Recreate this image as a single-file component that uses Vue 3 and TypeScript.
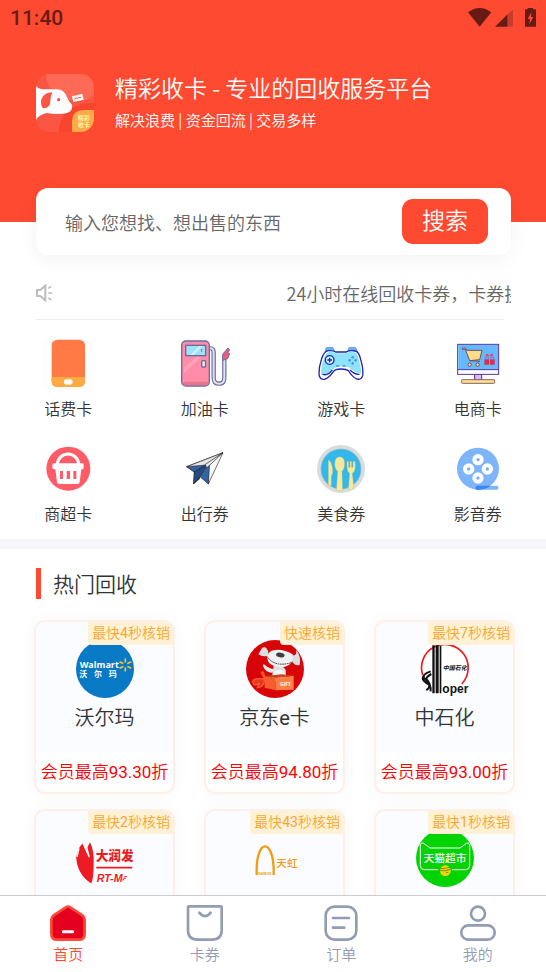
<script setup lang="ts">
import { ref } from 'vue'

type MenuIcon = 'phone' | 'fuel' | 'game' | 'shop' | 'basket' | 'travel' | 'food' | 'film'
type Brand = 'walmart' | 'jd' | 'sinopec' | 'rtmart' | 'rainbow' | 'tmall'
type TabIcon = 'home' | 'card' | 'order' | 'me'

interface MenuItem { icon: MenuIcon; label: string }
interface CardItem { brand: Brand; name: string; badge: string; price: string }
interface TabItem { icon: TabIcon; label: string }

const keyword = ref('')
const activeTab = ref<TabIcon>('home')

const menu: MenuItem[] = [
  { icon: 'phone', label: '话费卡' },
  { icon: 'fuel', label: '加油卡' },
  { icon: 'game', label: '游戏卡' },
  { icon: 'shop', label: '电商卡' },
  { icon: 'basket', label: '商超卡' },
  { icon: 'travel', label: '出行券' },
  { icon: 'food', label: '美食券' },
  { icon: 'film', label: '影音券' },
]

const cards: CardItem[] = [
  { brand: 'walmart', name: '沃尔玛', badge: '最快4秒核销', price: '会员最高93.30折' },
  { brand: 'jd', name: '京东e卡', badge: '快速核销', price: '会员最高94.80折' },
  { brand: 'sinopec', name: '中石化', badge: '最快7秒核销', price: '会员最高93.00折' },
  { brand: 'rtmart', name: '', badge: '最快2秒核销', price: '' },
  { brand: 'rainbow', name: '', badge: '最快43秒核销', price: '' },
  { brand: 'tmall', name: '', badge: '最快1秒核销', price: '' },
]

const tabs: TabItem[] = [
  { icon: 'home', label: '首页' },
  { icon: 'card', label: '卡券' },
  { icon: 'order', label: '订单' },
  { icon: 'me', label: '我的' },
]
</script>

<template>
  <div class="app">
    <main class="content">
      <header class="hero">
        <div class="status">
          <span class="clock">11:40</span>
          <svg class="status-icons" viewBox="0 0 204 60" aria-hidden="true">
            <path d="M0 13Q35-13 70 13L35 56Z" fill="#661c14" />
            <path d="M81 56L119 19V56Z" fill="#661c14" />
            <path d="M119 19L135 4V56H119Z" fill="#c93c2a" />
            <path d="M171 4H179V0H195V4H204V56H171Z" fill="#661c14" />
            <path d="M190 13L179 33H186L184 49L196 27H189Z" fill="#fe4a30" />
          </svg>
        </div>
        <div class="brand">
          <svg class="logo" viewBox="0 0 174 174" aria-hidden="true">
            <defs>
              <clipPath id="logo-clip"><rect width="174" height="174" rx="40" /></clipPath>
            </defs>
            <g clip-path="url(#logo-clip)">
              <rect width="174" height="174" fill="#fb5644" />
              <path d="M30 0H174V62Q140 90 90 76Q30 55 30 0Z" fill="#ff6a56" />
              <path d="M68 174Q72 88 174 86V174Z" fill="#f8452f" />
              <path d="M108 174V140Q110 108 142 108H174V140Q172 174 140 174Z" fill="#feaa47" />
            </g>
            <path d="M0 36Q8 46 24 46H64Q84 46 93 70Q97 82 108 92Q112 118 78 119Q58 122 34 117Q12 120 0 137Z" fill="#fff" />
            <path d="M49 55Q24 55 16 76Q13 91 20 102Q40 105 43 84Q43 68 49 55Z" fill="#fb5644" />
            <circle cx="68" cy="77" r="5" fill="#fb5644" />
            <path d="M108 67L139 60L143 77L112 84Z" fill="#fff" />
            <path d="M116 76L120 71L124 75L128 70L135 71" fill="none" stroke="#fb5644" stroke-width="3" />
            <text x="125" y="137" class="logo-text">精彩</text>
            <text x="125" y="158" class="logo-text">收卡</text>
          </svg>
          <div>
            <h1 class="title">精彩收卡 - 专业的回收服务平台</h1>
            <p class="subtitle">解决浪费 | 资金回流 | 交易多样</p>
          </div>
        </div>
      </header>

      <form class="search" @submit.prevent>
        <input v-model="keyword" class="search-input" type="text" aria-label="输入您想找、想出售的东西" placeholder="输入您想找、想出售的东西" />
        <button class="search-button" type="submit">搜索</button>
      </form>

      <div class="notice">
        <svg class="speaker" viewBox="0 0 54 54" fill="none" stroke="#bdbdbd" aria-hidden="true">
          <path d="M3 18H13L28 5V49L13 36H3Z" stroke-width="6" />
          <path d="M37 13L46 7M37 27H48M37 42L46 47" stroke-width="5" />
        </svg>
        <div class="notice-window"><span class="notice-text">24小时在线回收卡券，卡券换</span></div>
      </div>

      <nav class="menu">
        <a v-for="item in menu" :key="item.icon" class="menu-item" href="#">
          <svg v-if="item.icon === 'phone'" class="menu-icon" viewBox="0 0 150 150" aria-hidden="true">
            <rect width="150" height="150" fill="#fdfdfd" />
            <rect x="26" y="2" width="100" height="142" rx="17" fill="#ff7a45" />
            <path d="M26 114H126V127Q126 144 109 144H43Q26 144 26 127Z" fill="#ffab43" />
            <rect x="63" y="121" width="26" height="16" rx="8" fill="#fff" />
          </svg>
          <svg v-else-if="item.icon === 'fuel'" class="menu-icon" viewBox="0 0 150 150" aria-hidden="true">
            <g fill="none">
              <path d="M90 28Q101 27 101 41V116Q101 134 117 134Q133 134 133 116V62" stroke="#6b6b9d" stroke-width="13" />
              <path d="M90 28Q101 27 101 41V116Q101 134 117 134Q133 134 133 116V62" stroke="#dfe3f6" stroke-width="6" />
            </g>
            <path d="M128 46L144 27L149 34L143 40L149 44L143 59L128 64Z" fill="#e95f7b" stroke="#6b6b9d" stroke-width="3" />
            <rect x="5" y="6" width="83" height="135" rx="13" fill="#ff8daa" stroke="#6b6b9d" stroke-width="4" />
            <path d="M7 128H86Q84 139 76 139H18Q8 139 7 128Z" fill="#e8758e" />
            <path d="M12 87L50 53H65L12 101Z" fill="#ffa3b9" />
            <rect x="17" y="19" width="60" height="31" fill="#9de2fc" stroke="#6b6b9d" stroke-width="4" />
            <path d="M31 48L57 21H68L41 48Z" fill="#cdf2ff" />
            <path d="M65 30V38" stroke="#6b6b9d" stroke-width="3" />
            <rect x="65" y="65" width="12" height="19" rx="3" fill="#dfe3f6" stroke="#6b6b9d" stroke-width="4" />
          </svg>
          <svg v-else-if="item.icon === 'game'" class="menu-icon" viewBox="0 0 150 150" aria-hidden="true">
            <path d="M27 38L31 26H51L56 38M95 38L99 26H119L123 38" fill="#66b8fa" stroke="#4e9df0" stroke-width="3" />
            <path d="M36 35Q52 34 59 39H91Q99 33 118 36Q129 38 134 62Q143 91 140 110Q136 124 122 120Q108 113 98 96Q91 90 75 90Q57 90 52 98Q38 118 26 121Q11 123 9 106Q8 85 16 62Q23 38 36 35Z" fill="#fff" />
            <path d="M39 39Q52 38 59 43H91Q99 37 115 40Q125 42 128 62Q138 95 134 104L116 98L98 85Q75 78 57 86L35 103L16 108Q13 90 22 64Q29 41 39 39Z" fill="#8de3fd" />
            <path d="M36 35Q52 34 59 39H91Q99 33 118 36Q129 38 134 62Q143 91 140 110Q136 124 122 120Q108 113 98 96Q91 90 75 90Q57 90 52 98Q38 118 26 121Q11 123 9 106Q8 85 16 62Q23 38 36 35Z" fill="none" stroke="#2222ae" stroke-width="4" />
            <path d="M21 106Q35 111 48 94M129 106Q116 107 103 94" fill="none" stroke="#2222ae" stroke-width="4" stroke-linecap="round" />
            <circle cx="41" cy="63" r="13" fill="#c8f4ff" stroke="#2222ae" stroke-width="4" />
            <path d="M34 63H48M41 56V70" stroke="#2222ae" stroke-width="4" />
            <g fill="#4797ec"><circle cx="110" cy="55" r="4" /><circle cx="101" cy="64" r="4" /><circle cx="119" cy="64" r="4" /><circle cx="110" cy="73" r="4" /></g>
            <path d="M60 81H70M79 81H89" stroke="#4797ec" stroke-width="4" />
          </svg>
          <svg v-else-if="item.icon === 'shop'" class="menu-icon" viewBox="0 0 150 150" aria-hidden="true">
            <rect x="65" y="106" width="21" height="17" fill="#dfb9f7" stroke="#4f3290" stroke-width="3" />
            <rect x="14" y="16" width="123" height="90" fill="#fff" stroke="#4f3290" stroke-width="3" />
            <rect x="16" y="18" width="119" height="73" fill="#65baff" />
            <path d="M14 92H137" stroke="#4f3290" stroke-width="3" />
            <path d="M16 103H135" stroke="#eee2fc" stroke-width="4" />
            <rect x="26" y="122" width="99" height="11" rx="2" fill="#ffe08b" stroke="#8b6270" stroke-width="3" />
            <path d="M28 27H38L41 34H87L80 62L50 65L37 31H28ZM50 65L81 67" fill="#ffdc87" stroke="#714c68" stroke-width="3" />
            <circle cx="50" cy="77" r="5" fill="#ffdc87" stroke="#714c68" stroke-width="3" />
            <circle cx="74" cy="77" r="5" fill="#ffdc87" stroke="#714c68" stroke-width="3" />
            <path d="M94 61H108V77H94ZM111 61H125V77H111Z" fill="#d72f55" />
            <path d="M97 60V54H106V60M113 60V54H122V60" fill="none" stroke="#8074ba" stroke-width="3" />
            <circle cx="102" cy="48" r="4" fill="#d54c76" /><circle cx="116" cy="48" r="4" fill="#d54c76" />
            <path d="M102 47Q109 55 116 47" fill="none" stroke="#d54c76" stroke-width="3" />
          </svg>
          <svg v-else-if="item.icon === 'basket'" class="menu-icon" viewBox="0 0 150 150" aria-hidden="true">
            <circle cx="76" cy="74" r="66" fill="#ff5c67" />
            <path d="M43 62A32 32 0 0 1 107 62" fill="none" stroke="#fff" stroke-width="9" />
            <path d="M33 58H117Q122 58 122 63V71Q122 76 117 76H115L110 114Q109 120 103 120H49Q43 120 42 114L37 76H33Q28 76 28 71V63Q28 58 33 58Z" fill="#fff" />
            <path d="M51 81H60V105H51ZM71 81H81V105H71ZM91 81H100V105H91Z" fill="#ff5c67" />
          </svg>
          <svg v-else-if="item.icon === 'travel'" class="menu-icon" viewBox="0 0 150 150" aria-hidden="true">
            <g stroke="#292b32" stroke-width="2" stroke-linejoin="round">
              <path d="M129 26L20 68L82 61Z" fill="#f2f2f0" />
              <path d="M129 26L20 68L43 84L81 64Z" fill="#e4e5e5" />
              <path d="M20 68L80 63L43 84Z" fill="#3165a4" />
              <path d="M129 26L82 62L85 120Z" fill="#f7f7f5" />
              <path d="M43 84L84 58L41 119Z" fill="#244b82" />
              <path d="M41 119L58 99L59 104Z" fill="#292b32" />
              <path d="M43 84L84 60L60 98L41 119Z" fill="#244b82" />
              <path d="M60 98L89 57L85 120Z" fill="#3165a4" />
              <path d="M76 61L129 26L80 72Z" fill="#e8e8e6" />
            </g>
          </svg>
          <svg v-else-if="item.icon === 'food'" class="menu-icon" viewBox="0 0 150 150" aria-hidden="true">
            <circle cx="75" cy="75" r="72" fill="#d9dcdd" />
            <circle cx="75" cy="75" r="60" fill="#31b8ec" stroke="#8bb5c2" stroke-width="2" />
            <g fill="#f5e99c" stroke="#a6af86" stroke-width="1">
              <path d="M37 47Q48 53 50 77Q52 89 46 96V125H37Z" />
              <path d="M71 38Q87 39 86 61Q86 75 78 82L80 140H61L65 82Q56 75 56 61Q56 39 71 38Z" />
              <path d="M93 52H98V70H102V52H107V70H111V52H117Q121 82 109 88L114 134Q105 140 97 136L101 88Q91 84 93 52Z" />
            </g>
          </svg>
          <svg v-else class="menu-icon" viewBox="0 0 150 150" aria-hidden="true">
            <circle cx="75" cy="74" r="63" fill="#7eb5fa" />
            <rect x="68" y="125" width="68" height="12" rx="4" fill="#7eb5fa" />
            <path d="M72 125H113Q98 137 75 137H68V129Q68 125 72 125Z" fill="#3d84f4" />
            <g fill="#75aefa" stroke="#fff" stroke-width="12"><circle cx="75" cy="47" r="11" /><circle cx="47" cy="75" r="11" /><circle cx="103" cy="75" r="11" /><circle cx="75" cy="102" r="11" /></g>
          </svg>
          <span>{{ item.label }}</span>
        </a>
      </nav>

      <section class="hot">
        <h2 class="hot-title">热门回收</h2>
        <div class="cards">
          <article v-for="card in cards" :key="card.brand" class="card">
            <span class="badge">{{ card.badge }}</span>
            <div class="card-top">
              <svg v-if="card.brand === 'walmart'" class="card-logo" viewBox="0 0 174 174" aria-hidden="true">
                <circle cx="87" cy="87" r="87" fill="#0879c4" />
                <text x="11" y="84" class="walmart-text">Walmart</text>
                <g class="walmart-sub"><text x="10" y="112">沃</text><text x="54" y="112">尔</text><text x="98" y="112">玛</text></g>
                <path d="M148 66V57M148 84V93M140 70L132 66M156 80L164 84M140 80L132 84M156 70L164 66" stroke="#fbc02e" stroke-width="5" stroke-linecap="round" />
              </svg>
              <svg v-else-if="card.brand === 'jd'" class="card-logo" viewBox="0 0 174 174" aria-hidden="true">
                <circle cx="87" cy="87" r="87" fill="#d80508" />
                <path d="M83 78Q111 71 119 91L121 124H76Z" fill="#dcdde0" />
                <path d="M56 74Q49 70 52 80Q58 96 79 99L84 87Q68 86 56 74Z" fill="#e7e8ea" />
                <path d="M66 32Q57 14 47 26L37 43Q49 52 68 47ZM139 45Q152 50 151 30Q166 48 161 75Q145 80 136 59Z" fill="#dcdde0" />
                <path d="M77 32Q107 23 140 43Q145 77 108 82Q63 79 64 52Q64 38 77 32Z" fill="#eff0f1" />
                <path d="M66 53Q88 82 136 68" fill="none" stroke="#34363a" stroke-width="3" stroke-dasharray="5 2" />
                <ellipse cx="103" cy="45" rx="13" ry="7" transform="rotate(10 103 45)" fill="#3c3e40" />
                <ellipse cx="99" cy="101" rx="17" ry="12" fill="#f5f5f5" />
                <path d="M56 117L46 98Q54 88 56 117Q22 112 20 126Q25 142 40 129L34 143Q55 142 56 117Z" fill="#e53a21" stroke="#ff5830" stroke-width="4" />
                <path d="M56 108L89 114V151L56 143Z" fill="#f65c2d" />
                <path d="M89 114L143 107V149L89 151Z" fill="#ff7e48" />
                <path d="M56 108L107 103L143 107L89 114Z" fill="#c34725" />
                <text x="102" y="137" class="gift-text">GIFT</text>
              </svg>
              <svg v-else-if="card.brand === 'sinopec'" class="card-logo" viewBox="0 0 174 174" aria-hidden="true">
                <circle cx="87" cy="87" r="87" fill="#fff" />
                <path d="M20 105A70 70 0 1 1 137 132" fill="none" stroke="#ed1c24" stroke-width="5" />
                <path d="M49 16H56V160H49ZM59 16H68V160H59ZM71 18H76V160H71Z" fill="#111" />
                <path d="M44 94Q20 102 20 116Q21 124 39 134Q43 141 31 151M46 102Q31 110 31 117Q45 132 44 154M24 108Q21 115 38 127" fill="none" stroke="#111" stroke-width="6" />
                <text x="79" y="158" class="sinopec-text">oper</text>
                <text x="80" y="91" class="sinopec-cn">中国石化</text>
              </svg>
              <svg v-else-if="card.brand === 'rtmart'" class="card-logo" viewBox="0 0 174 174" aria-hidden="true">
                <defs><clipPath id="badge-round"><circle cx="87" cy="87" r="87" /></clipPath></defs>
                <g clip-path="url(#badge-round)">
                  <path d="M0 85Q7 52 21 43L30 63L42 40Q55 65 53 106Q53 148 46 164Q5 139 0 85Z" fill="#ed1c24" />
                  <path d="M21 43Q36 76 40 85L31 51M9 58L3 84" fill="none" stroke="#fff" stroke-width="4" />
                  <text x="59" y="92" class="rt-cn">大润发</text>
                  <path d="M61 116H174" stroke="#ed1c24" stroke-width="5" />
                  <text x="62" y="158" class="rt-en">RT-Mart</text>
                </g>
              </svg>
              <svg v-else-if="card.brand === 'rainbow'" class="card-logo" viewBox="0 0 174 174" aria-hidden="true">
                <path d="M32 138V119C34 30 80 30 83 119V138" fill="none" stroke="#f39b13" stroke-width="7" />
                <text x="37" y="137" class="rainbow-en">RAINBOW</text>
                <text x="91" y="114" class="rainbow-cn">天虹</text>
              </svg>
              <svg v-else class="card-logo" viewBox="0 0 174 174" aria-hidden="true">
                <circle cx="87" cy="87" r="87" fill="#02d302" />
                <path d="M66 122H25Q13 122 13 110V46Q16 40 23 43L42 57H132L151 43Q158 40 161 46V110Q161 122 149 122H108" fill="none" stroke="#fff" stroke-width="3" />
                <text x="23" y="98" class="tmall-text">天猫超市</text>
                <circle cx="88" cy="125" r="16" fill="#ffce13" />
                <path d="M72 119Q89 119 102 115M73 125Q91 127 103 121M90 130L97 131" fill="none" stroke="#6a9c08" stroke-width="3" />
              </svg>
              <h3 class="card-name">{{ card.name }}</h3>
            </div>
            <p class="price">{{ card.price }}</p>
          </article>
        </div>
      </section>
    </main>

    <nav class="tabbar">
      <button v-for="tab in tabs" :key="tab.icon" type="button" class="tab" :class="{ active: activeTab === tab.icon }" @click="activeTab = tab.icon">
        <svg v-if="tab.icon === 'home'" class="tab-icon" viewBox="0 0 114 114" aria-hidden="true">
          <path d="M50 10Q57 5 64 10L99 33Q107 39 107 49V89Q107 107 90 107H24Q7 107 7 89V49Q7 39 15 33Z" fill="#e60020" stroke="#fe4a36" stroke-width="8" />
          <path d="M43 83H71" stroke="#fff" stroke-width="9" stroke-linecap="round" />
        </svg>
        <svg v-else-if="tab.icon === 'card'" class="tab-icon" viewBox="0 0 114 114" fill="none" stroke="#929db5" stroke-width="8" stroke-linecap="round" aria-hidden="true">
          <path d="M10 7H104Q107 7 107 10V78Q107 107 78 107H35Q6 107 6 78V10Q6 7 10 7Z" />
          <path d="M40 26Q57 47 74 26" />
        </svg>
        <svg v-else-if="tab.icon === 'order'" class="tab-icon" viewBox="0 0 114 114" fill="none" stroke="#929db5" stroke-width="8" stroke-linecap="round" aria-hidden="true">
          <rect x="11" y="8" width="92" height="99" rx="27" />
          <path d="M33 42H81M33 71H67" />
        </svg>
        <svg v-else class="tab-icon" viewBox="0 0 114 114" fill="none" stroke="#929db5" stroke-width="8" aria-hidden="true">
          <circle cx="57" cy="29" r="21" />
          <rect x="7" y="64" width="100" height="43" rx="21" />
        </svg>
        <span>{{ tab.label }}</span>
      </button>
    </nav>
  </div>
</template>

<style>
body {
  margin: 0;
}
</style>

<style scoped>
.app {
  display: flex;
  flex-direction: column;
  height: 100vh;
  overflow: hidden;
  background: #fff;
  color: #333;
  font-family: "Noto Sans CJK SC", sans-serif;
  font-weight: 350;
}
.content {
  flex: 1;
  min-height: 0;
  overflow-x: hidden;
  overflow-y: auto;
  scrollbar-width: none;
}
h1, h2, h3, p {
  margin: 0;
  font-weight: inherit;
}
.hero {
  background: #fe4a30;
  color: #fff;
  padding-bottom: 90px;
}
.status {
  display: flex;
  align-items: center;
  justify-content: space-between;
  height: 36px;
  padding: 0 10px;
  color: #661c14;
}
.clock {
  font: 500 21px/36px Roboto, sans-serif;
}
.status-icons {
  width: 68px;
  height: 20px;
}
.brand {
  display: flex;
  gap: 21px;
  padding: 38px 36px 0;
}
.logo {
  flex: none;
  width: 58px;
  height: 58px;
}
.logo-text {
  font-size: 18px;
  font-weight: 700;
  fill: #fff3a8;
}
.title {
  font-size: 23px;
  line-height: 26px;
  white-space: nowrap;
}
.subtitle {
  margin-top: 10px;
  font-size: 15px;
  line-height: 20px;
}
.search {
  position: relative;
  display: flex;
  align-items: center;
  height: 67px;
  box-sizing: border-box;
  margin: -34px 35px 0 36px;
  padding: 0 23px 0 29px;
  border-radius: 12px;
  background: #fff;
  box-shadow: 0 4px 20px rgba(0, 0, 0, 0.05);
}
.search-input {
  flex: 1;
  min-width: 0;
  padding: 0;
  border: 0;
  outline: 0;
  background: transparent;
  color: #333;
  font: inherit;
  font-size: 18px;
}
.search-input::placeholder {
  color: #666;
  opacity: 1;
}
.search-button {
  width: 86px;
  height: 45px;
  padding: 0 0 4px;
  border: 0;
  border-radius: 11px;
  background: #fe4a30;
  color: #fff;
  font: inherit;
  font-size: 23px;
  line-height: 41px;
}
.notice {
  display: flex;
  align-items: center;
  gap: 8px;
  height: 65px;
  box-sizing: border-box;
  margin: 0 35px 0 36px;
  padding-top: 10px;
  background: linear-gradient(#eee, #eee) left bottom / calc(100% - 7px) 1px no-repeat;
}
.speaker {
  flex: none;
  width: 18px;
  height: 18px;
}
.notice-window {
  flex: 1;
  min-width: 0;
  overflow: hidden;
}
.notice-text {
  display: block;
  margin-left: 50%;
  font-size: 18px;
  line-height: 26px;
  white-space: nowrap;
  color: #666;
}
.menu {
  display: grid;
  grid-template-columns: repeat(4, 1fr);
  row-gap: 23px;
  padding: 19px 0 13px;
  border-bottom: 10px solid #f6f6fb;
}
.menu-item {
  display: flex;
  flex-direction: column;
  align-items: center;
  gap: 6px;
  font-size: 16px;
  line-height: 26px;
  color: #333;
  text-decoration: none;
}
.menu-icon {
  width: 50px;
  height: 50px;
}
.hot {
  padding: 19px 31px 15px 34px;
}
.hot-title {
  margin: 0 2px 21px;
  padding-left: 12px;
  border-left: 5px solid #fe4a30;
  font-size: 21px;
  line-height: 31px;
}
.cards {
  display: grid;
  grid-template-columns: repeat(3, 1fr);
  gap: 15px 29px;
}
.card {
  position: relative;
  box-sizing: border-box;
  height: 174px;
  overflow: hidden;
  border: 2px solid #ffefe9;
  border-radius: 11px;
  background: #fff;
  box-shadow: 0 0 20px rgba(0, 0, 0, 0.03);
  font-family: Roboto, "Noto Sans CJK SC DemiLight", "Noto Sans CJK SC", sans-serif;
  font-weight: 400;
  text-align: center;
}
.badge {
  position: absolute;
  top: 0;
  right: 0;
  padding: 0 3px 0 4px;
  border-radius: 0 0 0 4px;
  background: #fff1d6;
  color: #f9a62f;
  font-size: 14px;
  line-height: 23px;
}
.card-top {
  height: 130px;
  box-sizing: border-box;
  padding-top: 18px;
  background: #fbfcff;
}
.card-logo {
  display: block;
  width: 58px;
  height: 58px;
  margin: 0 auto;
  font-family: "Noto Sans CJK SC", sans-serif;
}
.card-name {
  margin-top: 5px;
  font-size: 20px;
  line-height: 30px;
}
.price {
  margin: 0 -4px;
  color: #f00;
  font-size: 17px;
  line-height: 40px;
  white-space: nowrap;
}
.walmart-text {
  font: 700 27px "Open Sans", sans-serif;
  fill: #fff;
}
.walmart-sub {
  font-size: 24px;
  font-weight: 700;
  fill: #fff;
}
.gift-text {
  font: 700 15px "Open Sans", sans-serif;
  fill: #fff;
}
.sinopec-text {
  font: 700 36px "Liberation Sans", sans-serif;
  fill: #111;
}
.sinopec-cn {
  font-size: 18px;
  font-weight: 700;
  font-style: italic;
  fill: #111;
}
.rt-cn {
  font-size: 38px;
  font-weight: 900;
  fill: #ed1c24;
}
.rt-en {
  font: italic 700 32px "Liberation Sans", sans-serif;
  fill: #ed1c24;
}
.rainbow-en {
  font: 700 8px "Liberation Sans", sans-serif;
  fill: #f39b13;
}
.rainbow-cn {
  font-size: 32px;
  font-weight: 500;
  fill: #f39b13;
}
.tmall-text {
  font-size: 32px;
  font-weight: 500;
  fill: #fff;
}
.tabbar {
  display: grid;
  grid-template-columns: repeat(4, 1fr);
  flex: none;
  padding: 8px 0 7px;
  border-top: 1px solid #ccc;
  background: #fff;
}
.tab {
  display: flex;
  flex-direction: column;
  align-items: center;
  gap: 1px;
  padding: 0;
  border: 0;
  background: none;
  color: #929db5;
  font: inherit;
  font-size: 15px;
  line-height: 22px;
}
.tab.active {
  color: #fe4a30;
}
.tab-icon {
  width: 38px;
  height: 38px;
}
</style>
